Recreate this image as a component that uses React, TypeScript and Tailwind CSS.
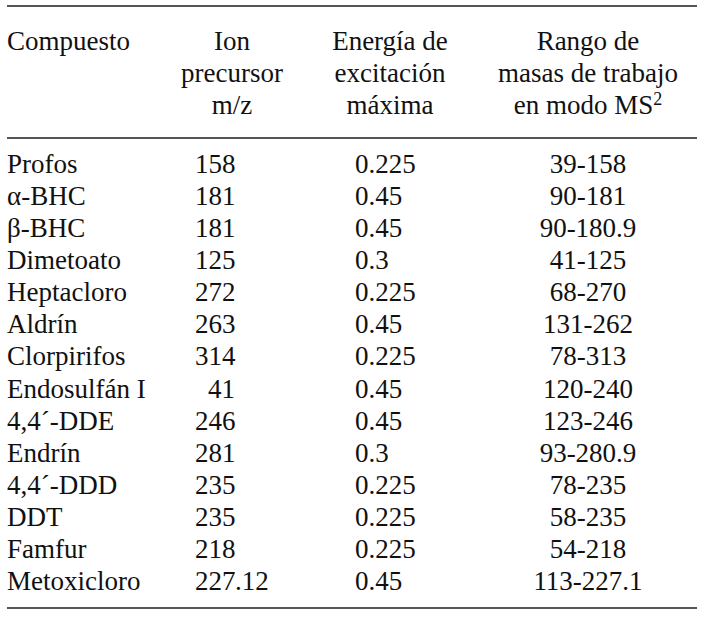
import React from 'react';

type Row = {
  name: string;
  ion: string;
  energy: string;
  range: string;
};

const rows: Row[] = [
  { name: 'Profos', ion: '158', energy: '0.225', range: '39-158' },
  { name: 'α-BHC', ion: '181', energy: '0.45', range: '90-181' },
  { name: 'β-BHC', ion: '181', energy: '0.45', range: '90-180.9' },
  { name: 'Dimetoato', ion: '125', energy: '0.3', range: '41-125' },
  { name: 'Heptacloro', ion: '272', energy: '0.225', range: '68-270' },
  { name: 'Aldrín', ion: '263', energy: '0.45', range: '131-262' },
  { name: 'Clorpirifos', ion: '314', energy: '0.225', range: '78-313' },
  { name: 'Endosulfán I', ion: '41', energy: '0.45', range: '120-240' },
  { name: '4,4´-DDE', ion: '246', energy: '0.45', range: '123-246' },
  { name: 'Endrín', ion: '281', energy: '0.3', range: '93-280.9' },
  { name: '4,4´-DDD', ion: '235', energy: '0.225', range: '78-235' },
  { name: 'DDT', ion: '235', energy: '0.225', range: '58-235' },
  { name: 'Famfur', ion: '218', energy: '0.225', range: '54-218' },
  { name: 'Metoxicloro', ion: '227.12', energy: '0.45', range: '113-227.1' },
];

// integer part right-aligned so the values line up on the decimal point
const IonValue: React.FC<{ value: string }> = ({ value }) => {
  const [whole, frac] = value.split('.');
  return (
    <span>
      <span className="inline-block w-[40px] text-right">{whole}</span>
      {frac !== undefined && <span>.{frac}</span>}
    </span>
  );
};

const cols = 'grid grid-cols-[163px_124px_192px_204px]';

export default function App() {
  return (
    <div
      className="w-[712px] h-[619px] bg-white text-[#111] text-[27px]"
      style={{ fontFamily: '"Liberation Serif", "Times New Roman", serif' }}
    >
      <div className="pt-[5px] pl-[7px] w-[697px]">
        <div className="border-t-2 border-[#555]" />

        {/* header */}
        <div className={`${cols} leading-[32px] pt-[18px] pb-[13px]`}>
          <div>Compuesto</div>
          <div className="text-center">
            Ion
            <br />
            precursor
            <br />
            m/z
          </div>
          <div className="text-center">
            Energía de
            <br />
            excitación
            <br />
            máxima
          </div>
          <div className="text-center">
            Rango de
            <br />
            masas de trabajo
            <br />
            en modo MS
            <span className="relative -top-[9px] text-[18px] align-baseline">2</span>
          </div>
        </div>

        <div className="border-t-2 border-[#555]" />

        {/* body */}
        <div className="pt-[9px] pb-[10px]">
          {rows.map((row) => (
            <div key={row.name} className={`${cols} h-[32.08px] leading-[32px]`}>
              <div className="whitespace-nowrap">{row.name}</div>
              <div className="pl-[25px] whitespace-nowrap">
                <IonValue value={row.ion} />
              </div>
              <div className="pl-[61px]">{row.energy}</div>
              <div className="text-center">{row.range}</div>
            </div>
          ))}
        </div>

        <div className="border-t-2 border-[#555]" />
      </div>
    </div>
  );
}
